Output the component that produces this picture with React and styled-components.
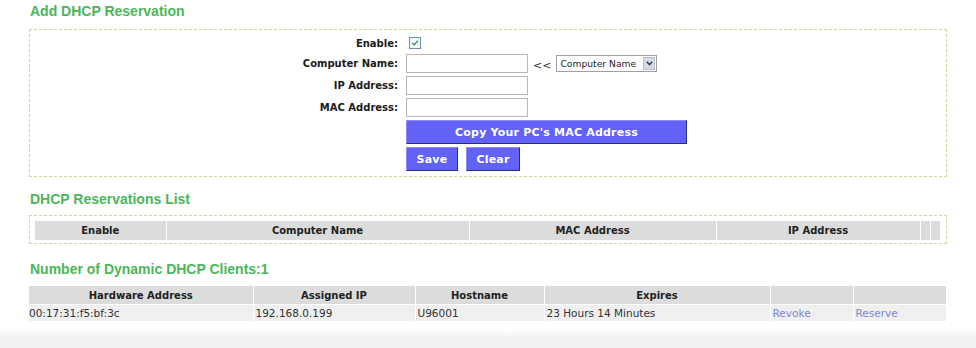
import React from 'react'
import styled, { createGlobalStyle } from 'styled-components'

const Global = createGlobalStyle`
body {
    margin: 0;
    background: #ffffff;
    font-family: "DejaVu Sans", Verdana, sans-serif;
}
`

const Page = styled.div`
width: 976px;
height: 348px;
display: flex;
flex-direction: column;
overflow: hidden;
`

const Content = styled.div`
padding-left: 29px;
width: 918px;
flex: 1;
`

const Title = styled.h2`
margin: ${props => props.top || 3}px 0 ${props => props.bottom || 10}px 1px;
font-family: "Liberation Sans", Arial, sans-serif;
font-size: 14px;
line-height: 16px;
font-weight: bold;
color: #4cb65a;
`

const DashBox = styled.div`
border: 1px dashed #d3d394;
padding: ${props => props.pad || '5px 0 5px 0'};
`

const Form = styled.div`
display: grid;
grid-template-columns: 368px auto;
column-gap: 8px;
row-gap: 3px;
align-items: center;
`

const Label = styled.div`
text-align: right;
font-size: 10px;
font-weight: bold;
color: #1a1a1a;
`

const Cell = styled.div`
display: flex;
align-items: center;
gap: 5px;
height: ${props => props.h || 19}px;
`

const Check = styled.span`
width: 10px;
height: 10px;
margin-left: 3px;
border: 1px solid #6f8fb0;
background: #f4f7fb;
display: inline-flex;
align-items: center;
justify-content: center;
`

const Input = styled.input`
box-sizing: border-box;
width: 122px;
height: 19px;
border: 1px solid #b8b8b8;
background: #ffffff;
padding: 0 2px;
outline: none;
`

const Arrows = styled.span`
font-size: 11px;
color: #333;
margin: 3px 0 0 0;
`

const Select = styled.div`
box-sizing: border-box;
width: 101px;
height: 17px;
border: 1px solid #9aa0a8;
display: flex;
align-items: center;
justify-content: space-between;
padding-left: 3px;
font-size: 9.2px;
color: #222;
background: #fff;
`

const SelectArrow = styled.span`
width: 12px;
height: 13px;
margin-right: 1px;
background: #d6dbe3;
border: 1px solid #b9c0cc;
box-sizing: border-box;
display: inline-flex;
align-items: center;
justify-content: center;
`

const Btn = styled.button`
box-sizing: border-box;
height: 24px;
width: ${props => props.w}px;
padding: 0;
background: #6262f6;
color: #ffffff;
font-family: "DejaVu Sans", Verdana, sans-serif;
font-size: 11px;
font-weight: bold;
letter-spacing: 0.2px;
border: 1px solid;
border-color: #8c8cff #2b2b7a #2b2b7a #8c8cff;
`

const Buttons = styled.div`
display: flex;
gap: 8px;
height: 24px;
`

const Table = styled.table`
table-layout: fixed;
border-collapse: collapse;
width: ${props => props.w}px;
`

const Th = styled.th`
background: #dcdcdc;
height: ${props => props.h || 18}px;
padding: 0;
font-size: 10px;
font-weight: bold;
color: #222;
text-align: center;
border-right: 1px solid #ffffff;
&:last-child { border-right: none; }
`

const Td = styled.td`
background: #efefef;
height: 16px;
padding: 0 0 0 2px;
font-size: 10.5px;
color: ${props => props.link ? '#8484d6' : '#333333'};
border-right: 1px solid #ffffff;
border-top: 1px solid #ffffff;
white-space: nowrap;
&:first-child { padding-left: 0; }
&:last-child { border-right: none; }
`

const Footer = styled.div`
height: 18px;
background: linear-gradient(#ffffff, #f2f2f2 40%, #f2f2f2);
`

const resCols = [131, 303, 247, 204, 10, 10]
const resHeads = ['Enable', 'Computer Name', 'MAC Address', 'IP Address', '', '']
const clientCols = [224, 162, 129, 226, 83, 93]
const clientHeads = ['Hardware Address', 'Assigned IP', 'Hostname', 'Expires', '', '']

export default function App() {
    return (
    <Page>
        <Global />
        <Content>
            <Title>Add DHCP Reservation</Title>
            <DashBox>
                <Form>
                    <Label>Enable:</Label>
                    <Cell h={16}>
                        <Check>
                            <svg width="8" height="8" viewBox="0 0 9 9">
                                <path d="M1.5 4.5 L3.6 6.6 L7.6 1.8" stroke="#2f9a3a" strokeWidth="1.5" fill="none" />
                            </svg>
                        </Check>
                    </Cell>
                    <Label>Computer Name:</Label>
                    <Cell>
                        <Input />
                        <Arrows>&lt;&lt;</Arrows>
                        <Select>
                            Computer Name
                            <SelectArrow>
                                <svg width="7" height="5" viewBox="0 0 7 5">
                                    <path d="M0.8 0.8 L3.5 3.6 L6.2 0.8" stroke="#2b3f66" strokeWidth="1.5" fill="none" />
                                </svg>
                            </SelectArrow>
                        </Select>
                    </Cell>
                    <Label>IP Address:</Label>
                    <Cell><Input /></Cell>
                    <Label>MAC Address:</Label>
                    <Cell><Input /></Cell>
                    <div />
                    <Cell h={24}><Btn w={281}>Copy Your PC's MAC Address</Btn></Cell>
                    <div />
                    <Buttons>
                        <Btn w={52}>Save</Btn>
                        <Btn w={54}>Clear</Btn>
                    </Buttons>
                </Form>
            </DashBox>

            <Title top={14} bottom={8}>DHCP Reservations List</Title>
            <DashBox pad="5px 6px 3px 5px">
                <Table w={905}>
                    <colgroup>
                        {resCols.map((w, i) => <col key={i} style={{ width: w }} />)}
                    </colgroup>
                    <thead>
                        <tr>
                            {resHeads.map((h, i) => <Th key={i} h={19}>{h}</Th>)}
                        </tr>
                    </thead>
                </Table>
            </DashBox>

            <Title top={17} bottom={9}>Number of Dynamic DHCP Clients:1</Title>
            <Table w={917}>
                <colgroup>
                    {clientCols.map((w, i) => <col key={i} style={{ width: w }} />)}
                </colgroup>
                <thead>
                    <tr>
                        {clientHeads.map((h, i) => <Th key={i}>{h}</Th>)}
                    </tr>
                </thead>
                <tbody>
                    <tr>
                        <Td>00:17:31:f5:bf:3c</Td>
                        <Td>192.168.0.199</Td>
                        <Td>U96001</Td>
                        <Td>23 Hours 14 Minutes</Td>
                        <Td link>Revoke</Td>
                        <Td link>Reserve</Td>
                    </tr>
                </tbody>
            </Table>
        </Content>
        <Footer />
    </Page>
    );
}
